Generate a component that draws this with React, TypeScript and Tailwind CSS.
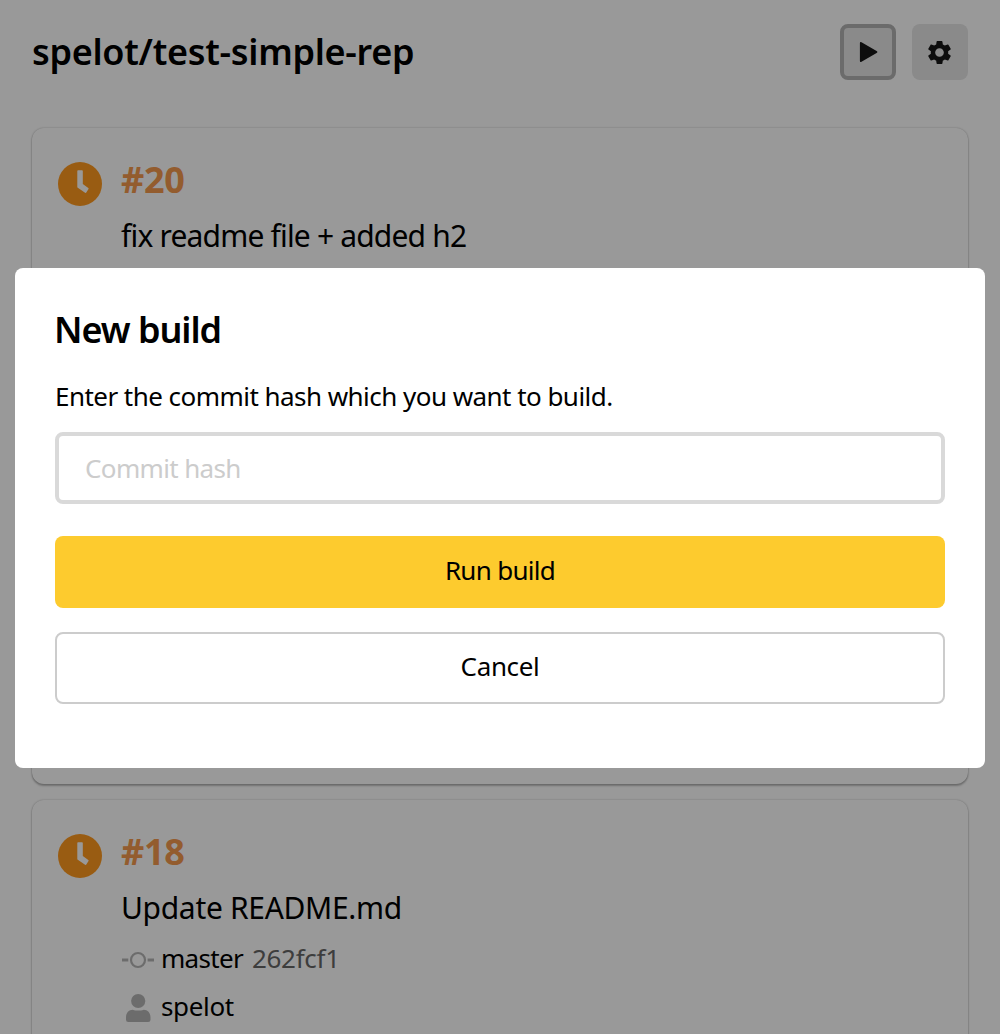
import type { ReactNode } from "react";
import { MdSettings } from "react-icons/md";

function ClockIcon() {
  return (
    <svg viewBox="0 0 44 44" className="size-11 shrink-0">
      <circle cx="22" cy="22" r="22" fill="#ff9a1f" />
      <path
        d="M20.1 8.2h3.900q.8 0 .8.8v12.900l5.500 4q.6.5.2 1.1l-2.200 3.500q-.5.7-1.2.2l-7.300-4.900q-.5-.3-.5-.9V9q0-.8.8-.8z"
        fill="#fff"
      />
    </svg>
  );
}

function CommitIcon() {
  return (
    <svg viewBox="0 0 32 32" className="size-8 shrink-0" fill="none" stroke="#b5b5b5">
      <circle cx="16" cy="16" r="7" strokeWidth="2.2" />
      <path d="M0 16h6.300M25.600 16H32" strokeWidth="2.800" />
    </svg>
  );
}

function UserIcon() {
  return (
    <svg viewBox="0 0 32 32" className="size-8 shrink-0" fill="#b5b5b5">
      <circle cx="16.200" cy="9" r="7.100" />
      <path d="M4 25.500c0-5 2.900-7.800 6.700-7.800 2 .7 3.500.9 5.500.9s3.500-.2 5.500-.9c3.900 0 6.800 2.800 6.800 7.800v2.200q0 2.300-2.300 2.300H6.300Q4 30 4 27.700z" />
    </svg>
  );
}

function BuildCard({ id, children }: { id: string; children: ReactNode }) {
  return (
    <article className="flex h-[656px] shrink-0 gap-[19px] rounded-xl bg-white pl-[26px] shadow-[0_0_2px_rgba(0,0,0,0.28),0_2px_2px_rgba(0,0,0,0.25)]">
      <div className="pt-[34px]">
        <ClockIcon />
      </div>
      <div className="pt-7">
        <h2 className="text-[36px] leading-[48px] font-bold tracking-[-0.3px] text-[#f5994d]">{id}</h2>
        {children}
      </div>
    </article>
  );
}

export default function App() {
  return (
    <div className="relative h-[1034px] w-[1000px] overflow-hidden bg-white font-['Noto_Sans',sans-serif] text-black">
      <header className="flex h-32 items-start justify-between px-8 pt-6">
        <h1 className="mt-1 text-[36px] leading-[48px] font-semibold tracking-[-0.29px]">spelot/test-simple-rep</h1>
        <div className="flex gap-4">
          <button className="flex size-14 items-center justify-center rounded-lg border-4 border-[#b3b3b3] bg-[#e6e6e6]">
            <svg viewBox="0 0 20 22" className="h-[22px] w-5">
              <path d="M1.900 2.200q0-1.800 1.600-.9l15.100 8.700q1.600 1 0 2l-15.100 8.700q-1.600.9-1.600-.9z" fill="#161616" />
            </svg>
          </button>
          <button className="flex size-14 items-center justify-center rounded-lg bg-[#e6e6e6] text-[#161616]">
            <MdSettings className="mr-px size-[29px]" />
          </button>
        </div>
      </header>

      <main className="flex flex-col gap-4 px-8">
        <BuildCard id="#20">
          <p className="mt-2 text-[30px] leading-[48px] tracking-[-0.82px]">fix readme file + added h2</p>
        </BuildCard>
        <BuildCard id="#18">
          <p className="mt-2 text-[30px] leading-[48px] tracking-[-0.32px]">Update README.md</p>
          <div className="mt-[2px] flex h-12 items-center text-[26px] leading-[48px]">
            <div className="mt-1 mr-[7px] ml-px">
              <CommitIcon />
            </div>
            <span className="mr-[9px] tracking-[-0.7px]">master</span>
            <span className="tracking-[-0.3px] text-[#666]">262fcf1</span>
          </div>
          <div className="flex h-12 items-center text-[26px] leading-[48px]">
            <div className="mt-1 mr-[7px] ml-px">
              <UserIcon />
            </div>
            <span className="tracking-[-0.35px]">spelot</span>
          </div>
        </BuildCard>
      </main>

      <div className="absolute inset-0 flex items-start justify-center bg-black/40 pt-[268px]">
        <section className="flex h-[500px] w-[970px] flex-col rounded-lg bg-white px-10 pt-[38px]">
          <h2 className="-ml-px text-[36px] leading-[48px] font-semibold tracking-[-1.050px]">New build</h2>
          <p className="mt-[22px] text-[26px] leading-[40px] tracking-[-0.540px]">
            Enter the commit hash which you want to build.
          </p>
          <input
            placeholder="Commit hash"
            className="mt-4 h-[72px] w-full rounded-lg border-4 border-[#d9d9d9] bg-white px-[26px] text-[26px] tracking-[-0.640px] outline-none placeholder:text-[#ccc]"
          />
          <button className="mt-8 h-[72px] rounded-lg bg-[#fdcb2e] pb-1 text-[26px] tracking-[-0.7px]">Run build</button>
          <button className="mt-6 h-[72px] rounded-lg border-2 border-[#ccc] bg-white pb-1 text-[26px] tracking-[-0.35px]">
            Cancel
          </button>
        </section>
      </div>
    </div>
  );
}
